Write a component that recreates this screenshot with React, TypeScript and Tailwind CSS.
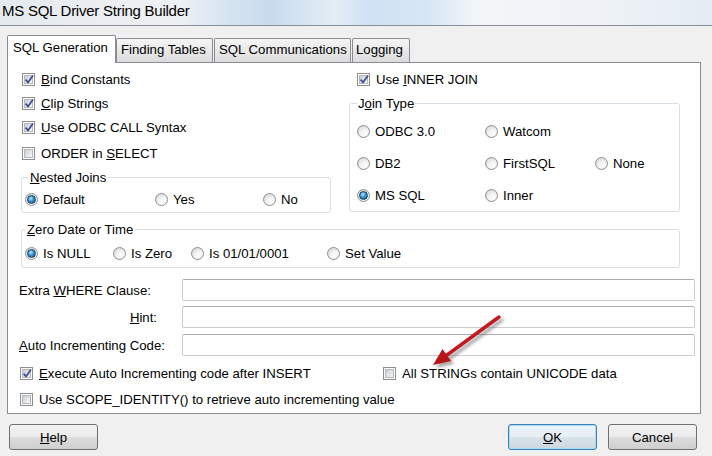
import React from "react";

const Check = ({ checked }: { checked?: boolean }) => (
  <span className="inline-flex w-[13px] h-[13px] shrink-0 items-center justify-center border border-[#8e8f8f] bg-white">
    <span className="w-[9px] h-[9px] bg-linear-to-br from-[#c9ced4] to-[#f8f8f9] border border-[#b3b8be] overflow-visible">
      {checked && (
        <svg width="9" height="9" viewBox="0 0 9 9" className="overflow-visible">
          <path d="M0.6 3.6 L3 6.4 L8 -0.6" fill="none" stroke="#3e5292" strokeWidth="1.8" strokeLinejoin="round" />
        </svg>
      )}
    </span>
  </span>
);

const Radio = ({ on }: { on?: boolean }) => (
  <span className="inline-flex w-[13px] h-[13px] shrink-0 items-center justify-center rounded-full border border-[#8e8f8f] bg-[radial-gradient(circle_at_65%_70%,#ffffff_0%,#f0f0f0_45%,#cbcbcb_100%)]">
    {on && (
      <span className="w-[9px] h-[9px] rounded-full border border-[#123f63] bg-[radial-gradient(circle_at_40%_35%,#bfe9fb_0%,#3c9bd6_40%,#0d4d7e_100%)]" />
    )}
  </span>
);

const CheckRow = ({
  checked,
  children,
  className,
}: {
  checked?: boolean;
  children: React.ReactNode;
  className?: string;
}) => (
  <div className={"flex items-center gap-[6px] " + (className ?? "")}>
    <Check checked={checked} />
    <span className="leading-[15px] whitespace-nowrap">{children}</span>
  </div>
);

const RadioItem = ({
  on,
  children,
  className,
}: {
  on?: boolean;
  children: React.ReactNode;
  className?: string;
}) => (
  <div className={"flex items-center gap-[5px] " + (className ?? "")}>
    <Radio on={on} />
    <span className="leading-[15px] whitespace-nowrap">{children}</span>
  </div>
);

const U = ({ children }: { children: React.ReactNode }) => <span className="underline underline-offset-[1px]">{children}</span>;

const Arrow = () => (
  <svg className="absolute left-[420px] top-[305px]" width="95" height="75" viewBox="0 0 95 75">
    <defs>
      <filter id="blur" x="-20%" y="-20%" width="140%" height="140%">
        <feGaussianBlur stdDeviation="1.6" />
      </filter>
      <linearGradient id="red" x1="0" y1="0" x2="1" y2="1">
        <stop offset="0" stopColor="#d9262c" />
        <stop offset="1" stopColor="#a90f15" />
      </linearGradient>
    </defs>
    <g filter="url(#blur)" opacity="0.55" transform="translate(3,3)">
      <line x1="79" y1="12" x2="27" y2="50" stroke="#666" strokeWidth="3.5" strokeLinecap="round" />
      <polygon points="13,60 31,56 22.5,44" fill="#666" />
    </g>
    <line x1="79" y1="12" x2="27" y2="50" stroke="url(#red)" strokeWidth="3.5" strokeLinecap="round" />
    <polygon points="13,60 31,56 22.5,44" fill="#b8141a" />
  </svg>
);

export default function App() {
  return (
    <div className="relative w-[712px] h-[456px] overflow-hidden bg-[#f0f0f0] flex flex-col font-['Liberation_Sans',Arial,sans-serif] text-[13.2px] text-black">
      {/* Title bar */}
      <div className="h-[26px] shrink-0 border-b border-[#8a8f95] bg-[linear-gradient(90deg,#e5eaee_0%,#eef1f4_25%,#d9e6f2_31%,#c7dbee_38%,#e4edf5_47%,#cfe1f3_52%,#d6e6f4_60%,#f3f6f9_67%,#eef2f6_85%,#e4ecf3_100%)] pl-[2px] flex items-start">
        <span className="text-[15px] tracking-[-0.25px] leading-[22px] whitespace-nowrap">MS SQL Driver String Builder</span>
      </div>

      {/* Tabs */}
      <div className="mt-[9px] h-[27px] shrink-0 flex items-end pl-[7px]">
        <div className="relative z-10 h-[28px] mb-[-1px] w-[109px] bg-white border border-b-0 border-[#898c95] rounded-t-[2px] pl-[5px] pt-[4px] leading-[15px] whitespace-nowrap">
          SQL Generation
        </div>
        <div className="h-[24px] w-[97px] ml-[0px] border border-b-0 border-[#898c95] rounded-t-[2px] bg-linear-to-b from-[#f5f5f5] to-[#dcdcdc] pl-[4px] pt-[3px] leading-[15px] whitespace-nowrap">
          Finding Tables
        </div>
        <div className="h-[24px] w-[137px] ml-[1px] border border-b-0 border-[#898c95] rounded-t-[2px] bg-linear-to-b from-[#f5f5f5] to-[#dcdcdc] pl-[4px] pt-[3px] leading-[15px] whitespace-nowrap">
          SQL Communications
        </div>
        <div className="h-[24px] w-[58px] ml-[1px] border border-b-0 border-[#898c95] rounded-t-[2px] bg-linear-to-b from-[#f5f5f5] to-[#dcdcdc] pl-[3px] pt-[3px] leading-[15px] whitespace-nowrap">
          Logging
        </div>
      </div>

      {/* Panel */}
      <div className="ml-[7px] w-[694px] h-[352px] shrink-0 border border-[#898c95] bg-white pl-[13px] flex flex-col">
        <div className="flex">
          {/* left column */}
          <div className="w-[310px] pt-[4px] flex flex-col">
            <CheckRow checked className="h-[24px] ml-[1px]"><U>B</U>ind Constants</CheckRow>
            <CheckRow checked className="h-[24px] ml-[1px]"><U>C</U>lip Strings</CheckRow>
            <CheckRow checked className="h-[24px] ml-[1px]"><U>U</U>se ODBC CALL Syntax</CheckRow>
            <CheckRow className="h-[24px] ml-[1px] mt-[2px]">ORDER in <U>S</U>ELECT</CheckRow>
            <fieldset className="mt-[5px] border border-[#d5dfe5] rounded-[3px] pl-[3px] pt-[4px] pb-[3px]">
              <legend className="ml-[3px] px-[2px] leading-[15px]"><U>N</U>ested Joins</legend>
              <div className="flex h-[20px]">
                <RadioItem on className="w-[130px]">Default</RadioItem>
                <RadioItem className="w-[108px]">Yes</RadioItem>
                <RadioItem>No</RadioItem>
              </div>
            </fieldset>
          </div>
          {/* right column */}
          <div className="ml-[18px] w-[331px] pt-[4px] flex flex-col">
            <CheckRow checked className="h-[24px] ml-[8px]">Use <U>I</U>NNER JOIN</CheckRow>
            <fieldset className="mt-[5px] border border-[#d5dfe5] rounded-[3px] pl-[7px] pt-[4px]">
              <legend className="px-[1px] leading-[15px]">J<U>o</U>in Type</legend>
              <div className="flex h-[32px] items-center">
                <RadioItem className="w-[128px]">ODBC 3.0</RadioItem>
                <RadioItem>Watcom</RadioItem>
              </div>
              <div className="flex h-[32px] items-center">
                <RadioItem className="w-[128px]">DB2</RadioItem>
                <RadioItem className="w-[110px]">FirstSQL</RadioItem>
                <RadioItem>None</RadioItem>
              </div>
              <div className="flex h-[32px] items-center">
                <RadioItem on className="w-[128px]">MS SQL</RadioItem>
                <RadioItem>Inner</RadioItem>
              </div>
            </fieldset>
          </div>
        </div>

        {/* Zero Date or Time */}
        <fieldset className="mt-[9px] w-[659px] border border-[#d5dfe5] rounded-[3px] pl-[3px] pt-[6px] pb-[4px]">
          <legend className="px-[2px] leading-[15px]"><U>Z</U>ero Date or Time</legend>
          <div className="flex h-[20px] items-center">
            <RadioItem on className="w-[88px]">Is NULL</RadioItem>
            <RadioItem className="w-[78px]">Is Zero</RadioItem>
            <RadioItem className="w-[136px]">Is 01/01/0001</RadioItem>
            <RadioItem>Set Value</RadioItem>
          </div>
        </fieldset>

        {/* Form rows */}
        <div className="mt-[11px] ml-[-2px] flex flex-col">
          <div className="flex items-center h-[22px]">
            <span className="w-[163px] leading-[15px] whitespace-nowrap">Extra <U>W</U>HERE Clause:</span>
            <div className="w-[513px] h-[22px] border border-[#c9ccd1] border-t-[#abadb3] rounded-[2px] bg-white" />
          </div>
          <div className="flex items-center h-[22px] mt-[5px]">
            <span className="w-[163px] pr-[25px] text-right leading-[15px] whitespace-nowrap"><U>H</U>int:</span>
            <div className="w-[513px] h-[22px] border border-[#c9ccd1] border-t-[#abadb3] rounded-[2px] bg-white" />
          </div>
          <div className="flex items-center h-[22px] mt-[6px]">
            <span className="w-[163px] leading-[15px] whitespace-nowrap"><U>A</U>uto Incrementing Code:</span>
            <div className="w-[513px] h-[22px] border border-[#c9ccd1] border-t-[#abadb3] rounded-[2px] bg-white" />
          </div>
        </div>

        <div className="mt-[7px] ml-[-1px] flex h-[20px] items-center">
          <CheckRow checked className="w-[363px]"><U>E</U>xecute Auto Incrementing code after INSERT</CheckRow>
          <CheckRow>All STRINGs contain UNICODE data</CheckRow>
        </div>
        <CheckRow className="mt-[6px] ml-[-1px] h-[20px]">Use SCOPE_IDENTITY() to retrieve auto incrementing value</CheckRow>
      </div>

      {/* Buttons */}
      <div className="mt-[10px] h-[26px] flex items-center pl-[9px] pr-[15px]">
        <button className="w-[89px] h-[26px] border border-[#707070] rounded-[3px] bg-[linear-gradient(#f2f2f2_0%,#ebebeb_50%,#dddddd_50%,#cfcfcf_100%)] leading-[15px]">
          <U>H</U>elp
        </button>
        <div className="flex-1" />
        <button className="w-[89px] h-[26px] border border-[#3c7fb1] rounded-[3px] shadow-[inset_0_0_0_1px_#a6dcf6] bg-[linear-gradient(#eef4f8_0%,#e6eef4_50%,#d9e3ea_50%,#cbd7e0_100%)] leading-[15px]">
          <U>O</U>K
        </button>
        <button className="ml-[11px] w-[89px] h-[26px] border border-[#707070] rounded-[3px] bg-[linear-gradient(#f2f2f2_0%,#ebebeb_50%,#dddddd_50%,#cfcfcf_100%)] leading-[15px]">
          Cancel
        </button>
      </div>

      <Arrow />
    </div>
  );
}
